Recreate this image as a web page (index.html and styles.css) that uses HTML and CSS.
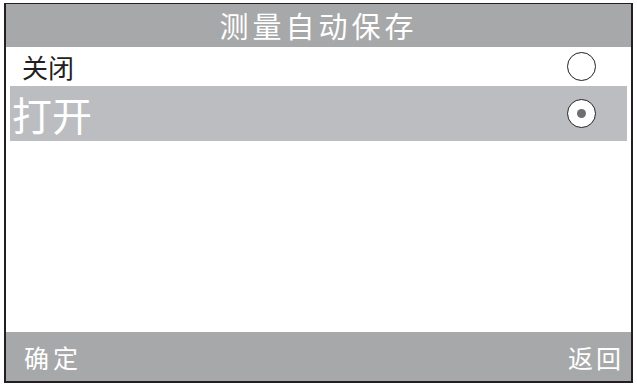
FILE: index.html
```html
<!DOCTYPE html>
<html lang="zh">
<head>
<meta charset="utf-8">
<link rel="stylesheet" href="styles.css">
</head>
<body>
<div class="frame">
  <div class="header">测量自动保存</div>
  <div class="list">
    <div class="row">
      <span class="label">关闭</span>
      <span class="radio"></span>
    </div>
    <div class="row selected">
      <span class="label">打开</span>
      <span class="radio checked"></span>
    </div>
  </div>
  <div class="footer">
    <span>确定</span>
    <span class="back">返回</span>
  </div>
</div>
</body>
</html>
```
FILE: styles.css
```css
html, body {
  margin: 0;
  padding: 0;
  background: #ffffff;
}
body {
  width: 637px;
  height: 388px;
  overflow: hidden;
  font-family: "Noto Sans CJK SC", "Noto Sans", sans-serif;
}
.frame {
  box-sizing: border-box;
  margin: 3px 4px 0 4px;
  width: 629px;
  height: 380px;
  border: 2px solid #231f20;
  border-top-width: 1px;
  display: flex;
  flex-direction: column;
  background: #ffffff;
}
.header {
  height: 43px;
  background: #a7a8aa;
  color: #ffffff;
  font-size: 29px;
  line-height: 43px;
  text-align: center;
  letter-spacing: 4px;
  font-weight: 400;
}
.list {
  flex: 1;
  display: flex;
  flex-direction: column;
}
.row {
  display: flex;
  align-items: center;
  justify-content: space-between;
  height: 39px;
  padding: 0 35px 0 16px;
  color: #231f20;
  font-size: 26px;
}
.row .label {
  line-height: 1;
  font-weight: 400;
}
.row.selected {
  height: 55px;
  margin: 0 4px;
  padding: 0 31px 0 2px;
  background: #bcbdc0;
  color: #ffffff;
  font-size: 40px;
}
.radio {
  box-sizing: border-box;
  width: 29px;
  height: 29px;
  border: 1.5px solid #231f20;
  border-radius: 50%;
  background: #ffffff;
  display: flex;
  align-items: center;
  justify-content: center;
}
.radio.checked::after {
  content: "";
  width: 9px;
  height: 9px;
  border-radius: 50%;
  background: #6d6e71;
}
.footer {
  height: 49px;
  background: #a7a8aa;
  color: #ffffff;
  display: flex;
  align-items: center;
  justify-content: space-between;
  padding: 0 6px 0 18px;
  font-size: 25px;
  letter-spacing: 4px;
  font-weight: 400;
}
.footer .back {
  letter-spacing: 3px;
  margin-right: 1px;
}
```
